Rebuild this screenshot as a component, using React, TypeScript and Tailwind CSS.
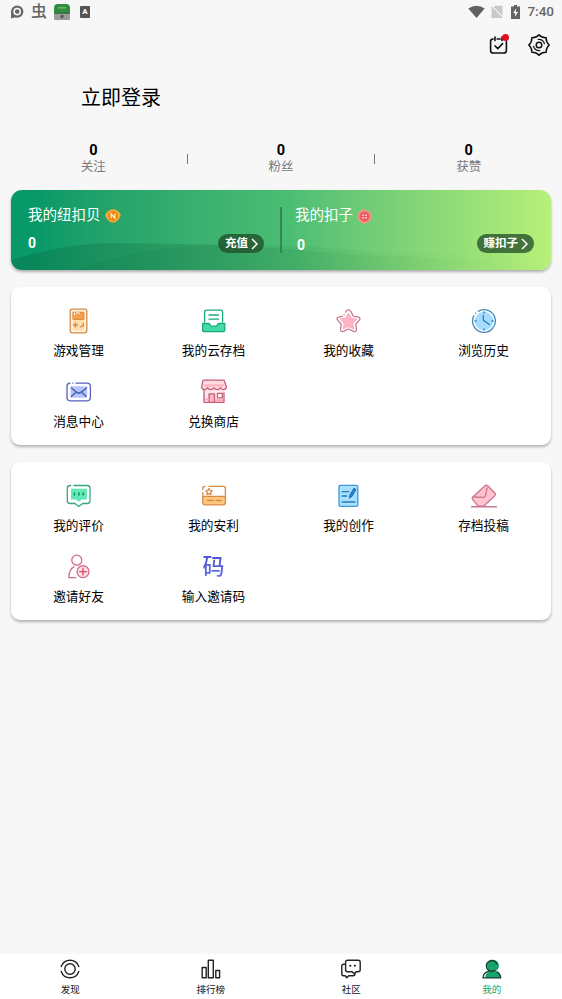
import type { ReactNode } from "react";

const CJK = "font-[Roboto,'Noto_Sans_CJK_SC',sans-serif]";

type Entry = { label: string; icon: ReactNode };

const Icon = ({ stroke, children }: { stroke: string; children: ReactNode }) => (
  <svg
    viewBox="0 0 26 26"
    className="size-[26px]"
    fill="none"
    stroke={stroke}
    strokeWidth="1.3"
    strokeLinecap="round"
    strokeLinejoin="round"
    aria-hidden="true"
  >
    {children}
  </svg>
);

const tools: Entry[] = [
  {
    label: "游戏管理",
    icon: (
      <Icon stroke="#d58a45">
        <rect x="4.2" y="1.2" width="16.6" height="23.6" rx="2.2" fill="#fff5e6" />
        <rect x="6.7" y="3.8" width="11.6" height="18.6" fill="#ffdca8" stroke="none" />
        <rect x="7.3" y="4.2" width="10.6" height="7.2" fill="#f3a04b" strokeWidth="1" />
        <path d="M8.5 6.5v-1.6M10.5 5h3" stroke="#fff" strokeWidth="1" />
        <path d="M9.4 15v4M7.4 17h4M14.6 19l.1-.1M17.4 15.4v2.6h-1.6" />
      </Icon>
    ),
  },
  {
    label: "我的云存档",
    icon: (
      <Icon stroke="#1fa878">
        <path d="M3.6 14V4.2Q3.6 2.2 5.6 2.2h14q2 0 2 2V14" fill="#fff" />
        <path d="M8 7h9.5M8 11.2h9.5" />
        <path d="M1.6 15.5H8l2 2.6h5.4l2-2.6h6.4v6.4q0 1.8-1.8 1.8H3.4q-1.8 0-1.8-1.8Z" fill="#43dca4" />
      </Icon>
    ),
  },
  {
    label: "我的收藏",
    icon: (
      <Icon stroke="#c8798e">
        <path d="m12.5 5.4 2.7 4.7 5.4 1-3.8 4 .7 5.6-5-2.3-5 2.3.7-5.6-3.8-4 5.4-1Z" fill="#ffb4c5" stroke="#ffb4c5" />
        <path d="M9.6 4.2Q10.8 1.7 12.5 1.7q1.6 0 2.6 2.2l1.7 3.4q.4.8 1.4 1l3.6.6q3.8.8 1.2 3.7l-2.5 2.7q-.7.8-.6 1.8l.5 3.8q.2 3.6-3 2.4l-3.6-1.8q-1.3-.6-2.6 0l-3.6 1.8q-3.2 1.2-3-2.4l.5-3.8q.1-1-.6-1.8L2 12.6Q-.6 9.7 3.2 8.9l3.2-.6" />
        <path d="M8.2 6.6v.1" />
      </Icon>
    ),
  },
  {
    label: "浏览历史",
    icon: (
      <Icon stroke="#4389bd">
        <circle cx="13" cy="13" r="9.3" fill="#a5dcff" stroke="none" />
        <path d="M7.2 3.2A11.4 11.4 0 1 1 2.8 7.9M4.5 5.4l.1-.1" />
        <path d="M12.3 7.5v4.7l6 4.3M13 4v1M13 21v1M4 13h1M21 13h1" stroke="#277fc0" />
      </Icon>
    ),
  },
  {
    label: "消息中心",
    icon: (
      <Icon stroke="#5562b8">
        <path d="M10 4.1h11q3.4 0 3.4 3.2v11.3q0 3.2-3.4 3.2H4.4Q1 21.8 1 18.6V7.3q0-3 3-3.2M6.8 4.1h.3" />
        <rect x="4.5" y="7.3" width="16.6" height="11.4" rx="1" fill="#b6c4ff" stroke="none" />
        <path d="m5.5 9 4.6 3.8q2.7 2.6 5.4 0L20.5 9M5.5 17.3l4-3.6M20 17.3l-3.8-3.6" stroke="#4662b7" strokeWidth="1.5" />
      </Icon>
    ),
  },
  {
    label: "兑换商店",
    icon: (
      <Icon stroke="#c45f77">
        <path d="M3 11v12.3h20V11" fill="#ffe6ec" stroke="none" />
        <path d="M8 22.8v-8h5.5v8" fill="#ffb5c4" />
        <path d="M16.5 14.4h4.8v4.4h-4.8Z" fill="#fff" />
        <path d="M4 20.6h3M14.6 21.2h7.6" stroke="#ffa6b7" strokeWidth="2" />
        <path d="M3 11v12.3h20V14" />
        <path d="M2.7 1.2h19.6q.9 0 1.2 1l1.9 5.8q-.2 2.6-2.8 2.6-2 0-3.2-1.8-1.1 1.8-3.2 1.8T13 8.8q-1.1 1.8-3.2 1.8T6.6 8.8Q5.5 10.6 3.5 10.6 1 10.6.7 8l1-5.8q.1-1 1-1Z" fill="#ffd9e0" />
        <path d="M4 6.6h18" stroke="#ffb0bf" strokeWidth="2" />
      </Icon>
    ),
  },
];

const creations: Entry[] = [
  {
    label: "我的评价",
    icon: (
      <Icon stroke="#38a781">
        <path d="M8 2.5h13.2q2.8 0 2.8 2.7v12.6q0 2.7-2.8 2.7h-4.6L12.8 23.4l-3.8-2.9H4.1q-2.8 0-2.8-2.7V5.2q0-2.7 2.8-2.7h.6" />
        <path d="M5 5.8h15.9v10.6h-5.2l-2.9 2.3-2.9-2.3H5Z" fill="#60e9b5" stroke="none" />
        <path d="M8.4 10v2M12.9 10v2M17.3 10v2" stroke="#129367" strokeWidth="1.6" />
      </Icon>
    ),
  },
  {
    label: "我的安利",
    icon: (
      <Icon stroke="#d98b43">
        <path d="M1.8 13.4h22.6v6.6q0 1.8-1.8 1.8H3.6q-1.8 0-1.8-1.8Z" fill="#ffc681" stroke="none" />
        <path d="M8 3.4h14.2q2.2 0 2.2 2.2v14q0 2.2-2.2 2.2H4q-2.2 0-2.2-2.2V9.6M1.8 6.6v-1Q1.8 3.4 4 3.4M1.8 13.4h22.6M6.5 17.5h6M15 17.5h5.4" />
        <path d="m8 5.4 1.1 2 2.2.4-1.6 1.6.3 2.3-2-1.1-2 1.1.3-2.3-1.6-1.6 2.2-.4Z" strokeWidth="1.2" />
      </Icon>
    ),
  },
  {
    label: "我的创作",
    icon: (
      <Icon stroke="#3d9ad7">
        <rect x="3" y="2.3" width="18.8" height="21" rx="1.2" fill="#a9dfff" />
        <path d="M6.2 8.6h6.6M6.2 13h4.6" stroke="#237dba" />
        <path d="M6.2 19h12.6" stroke="#237dba" strokeWidth="1.6" />
        <path d="m13.6 14.8.6-2.9 3.8-6.3 1.6 1-3.7 6.3Z" fill="#3ba5ec" stroke="#176fae" />
      </Icon>
    ),
  },
  {
    label: "存档投稿",
    icon: (
      <Icon stroke="#c8768b">
        <path d="M1.8 14 14 2.8q1.5-1.2 3 .2l6.8 7q1.2 1.5-.2 2.9L13.4 22.4q-.8.8-2 .8H8.6q-1.2 0-2-.8L1.7 16.6q-1-1.4.1-2.6Z" fill="#ffc2ce" />
        <path d="m3 14 9 .4q2 0 2.5-1.8l1.6-7.8" />
        <path d="M.7 23.8h24.6" strokeWidth="1.6" />
      </Icon>
    ),
  },
  {
    label: "邀请好友",
    icon: (
      <Icon stroke="#d06b83">
        <circle cx="10.8" cy="6.2" r="5" />
        <path d="M9.8 23.6H2.9Q2.9 15 8 12.8" />
        <circle cx="17" cy="17.6" r="6" fill="#ffdce4" />
        <path d="M17 14.2V21M13.6 17.6h6.8" stroke="#c84e6b" />
      </Icon>
    ),
  },
  {
    label: "输入邀请码",
    icon: (
      <span className="block bg-linear-to-b from-[#4d52cf] via-[#595fdb] to-[#5a72ec] bg-clip-text text-[22px] leading-[26px] font-medium text-transparent">
        码
      </span>
    ),
  },
];

const StatusBar = () => (
  <div className="flex h-[23px] items-center justify-between pr-[8px] pl-[10px] text-[#666]">
    <div className="flex items-center">
      <svg viewBox="0 0 14 14" className="size-[14px]" aria-hidden="true">
        <path d="M1 13.4V6.6A6.2 6.2 0 1 1 7.2 12.8L4 12.4Z" fill="#666" />
        <circle cx="7.2" cy="6.6" r="3.1" fill="#666" stroke="#fff" strokeWidth="1.5" />
      </svg>
      <span className="ml-[7px] text-[16px] leading-[23px] font-medium">虫</span>
      <svg viewBox="0 0 18 18" className="ml-[6px] size-[18px]" aria-hidden="true">
        <path d="M1 9h16v6.5q0 1.5-1.5 1.5h-13Q1 17 1 15.5Z" fill="#989b98" />
        <path d="M1 10V5q0-4 4-4h8q4 0 4 4v5Z" fill="#2f8e40" />
        <path d="M5 4.8h8" stroke="#78bf73" strokeWidth="1.3" />
        <path d="M1.5 10.2h15" stroke="#245d2d" />
        <path d="M7.7 12h2.8v3H7.7Z" fill="#555" />
      </svg>
      <span className="ml-[9px] flex h-3 w-[10px] items-center justify-center rounded-[1px] bg-[#555] text-[8px] font-bold text-white">
        A
      </span>
    </div>

    <div className="flex items-center">
      <svg viewBox="0 0 17 13" className="h-[13px] w-[17px]" aria-hidden="true">
        <path d="M.3 3.5Q8.5-2.2 16.7 3.5L8.5 13Z" fill="#606060" />
      </svg>
      <svg viewBox="0 0 12 13" className="ml-[6px] h-[13px] w-3" aria-hidden="true">
        <path d="M4 .8h7.5V13H.5V4.3Z" fill="#c9c9c9" />
        <path d="m.3 1.2 11.5 11.6" stroke="#f7f7f7" strokeWidth="2" />
        <path d="m0 1.8 11 11" stroke="#aaa" />
      </svg>
      <svg viewBox="0 0 9 14" className="ml-[8px] h-[14px] w-[9px]" aria-hidden="true">
        <path d="M3 0h3v1.4h3V14H0V1.4h3Z" fill="#626262" />
        <path d="M5.2 3.2 2.2 8h2l-.4 4L7 7H4.8Z" fill="#fff" />
      </svg>
      <span className="ml-[7px] text-[13.5px] leading-[23px] font-medium">7:40</span>
    </div>
  </div>
);

const TopActions = () => (
  <div className="flex h-[43px] items-center justify-end gap-[19px] pr-[12px]">
    <button type="button" className="relative" aria-label="签到">
      <svg viewBox="0 0 20 20" className="size-5" fill="none" stroke="#111" strokeWidth="1.6" strokeLinecap="round" strokeLinejoin="round">
        <path d="M4.2 4H4Q1.6 4 1.6 6.4v9Q1.6 18 4.2 18h10.6q2.6 0 2.6-2.6v-9M8.2 4h3M6 2v3.6M13 2v3.6M6 10.8l2.8 2.8 4.8-5" />
      </svg>
      <span className="absolute -top-[1px] right-0 size-[7px] rounded-full bg-[#e00b22]" />
    </button>
    <button type="button" aria-label="设置">
      <svg viewBox="0 0 22 22" className="size-[22px]" fill="none" stroke="#111" strokeWidth="1.5" strokeLinejoin="round" strokeLinecap="round">
        <path d="M11 .8q2.9 3.3 7.2 3 -.3 4.3 3 7.2-3.3 2.9-3 7.2-4.3-.3-7.2 3-2.9-3.3-7.2-3 .3-4.3-3-7.2 3.3-2.9 3-7.2 4.3.3 7.2-3Z" />
        <circle cx="11" cy="11" r="2.8" />
        <path d="M10.2 5.4q4.8-.4 6.2 4.2M11.8 16.6q-4.8.4-6.2-4.2" strokeWidth="1.3" />
      </svg>
    </button>
  </div>
);

const Stat = ({ label }: { label: string }) => (
  <div className="flex flex-1 flex-col items-center">
    <span className="text-[14.5px] leading-4 font-bold text-black">0</span>
    <span className="text-[12.5px] leading-4 text-[#777]">{label}</span>
  </div>
);

const PillButton = ({ label }: { label: string }) => (
  <button type="button" className="flex h-[19px] items-center gap-[3px] rounded-full bg-[#1f4b27]/75 pr-[6px] pl-[7px] text-[11.5px] font-bold text-white">
    {label}
    <svg viewBox="0 0 7 12" className="h-3 w-[7px]" fill="none" stroke="currentColor" strokeWidth="1.5" aria-hidden="true">
      <path d="m1 1 5 5-5 5" />
    </svg>
  </button>
);

const Wallet = () => (
  <section className="relative mx-[11px] mt-[15px] h-20 overflow-hidden rounded-[11px] bg-linear-to-r from-[#079968] from-5% via-[#4cbe73] via-52% to-[#b7f078] text-white shadow-[0_2px_3px_rgba(0,0,0,0.3)]">
    <svg viewBox="0 0 540 80" className="absolute inset-0 h-full w-full" aria-hidden="true">
      <defs>
        <linearGradient id="hill">
          <stop stopColor="#08754d" stopOpacity=".5" />
          <stop offset=".5" stopColor="#25834b" stopOpacity=".22" />
          <stop offset="1" stopColor="#8bd26c" stopOpacity="0" />
        </linearGradient>
      </defs>
      <path d="M0 70Q60 52 110 53Q180 54 230 55Q380 70 540 70V80H0Z" fill="url(#hill)" />
      <path d="M65 80Q130 55 205 55Q290 53 365 62Q440 66 540 57V80Z" fill="url(#hill)" opacity=".45" />
    </svg>

    <div className="relative flex h-full">
      <div className="flex w-[269px] flex-col pt-[16px] pr-[16px] pl-[17px]">
        <div className="flex h-5 items-center gap-[4px] text-[14.5px]">
          我的纽扣贝
          <svg viewBox="0 0 16 16" className="size-4" aria-hidden="true">
            <path d="M4 2.6Q8-.2 12 2.6q4 2.6 3.7 5.4Q14 12 10.6 14q-2.6 1-5.2 0Q2 12 .3 8 0 5.2 4 2.6Z" fill="#f6ac33" />
            <circle cx="8" cy="8" r="5" fill="#ee8226" />
            <path d="M6.2 10.2V5.8l3.6 4.4V5.8" fill="none" stroke="#fff2a8" strokeWidth="1.3" />
          </svg>
        </div>
        <div className="mt-[8px] flex h-[19px] items-center justify-between">
          <span className="text-[14px] font-bold">0</span>
          <PillButton label="充值" />
        </div>
      </div>

      <div className="mt-[17px] h-[46px] w-[2px] bg-[#297d50]/80" />

      <div className="flex flex-1 flex-col pt-[16px] pr-[17px] pl-[13px]">
        <div className="flex h-5 items-center gap-[4px] text-[14.5px]">
          我的扣子
          <svg viewBox="0 0 16 16" className="size-[15px]" aria-hidden="true">
            <circle cx="8" cy="8" r="7.2" fill="#ef8b7a" stroke="#e9a387" />
            <circle cx="8" cy="8" r="5.2" fill="#e65b66" />
            <path d="M5.5 6.6h2M8.6 6.6h2M5.5 9.4h2M8.6 9.4h2" stroke="#ffc6c0" strokeWidth="1.7" />
          </svg>
        </div>
        <div className="mt-[8px] flex h-[19px] items-center justify-between">
          <span className="pt-[3px] pl-[2px] text-[14px] font-bold">0</span>
          <PillButton label="赚扣子" />
        </div>
      </div>
    </div>
  </section>
);

const EntryCard = ({ entries }: { entries: Entry[] }) => (
  <section className="mx-[11px] mt-[17px] grid h-[158px] grid-cols-4 content-start gap-y-[18px] rounded-[9px] bg-white pt-[21px] shadow-[0_2px_3px_rgba(0,0,0,0.28)]">
    {entries.map((entry) => (
      <button key={entry.label} type="button" className="flex flex-col items-center">
        {entry.icon}
        <span className="mt-[7px] text-[12.7px] leading-5 text-black">{entry.label}</span>
      </button>
    ))}
  </section>
);

const navItems = [
  {
    label: "发现",
    icon: (
      <>
        <circle cx="10" cy="10" r="5.2" />
        <path d="M1.2 7.5Q3.5 1.2 10 1.2t8.8 6.3M1.2 12.5q2.3 6.3 8.8 6.3t8.8-6.3" />
      </>
    ),
  },
  {
    label: "排行榜",
    icon: <path d="M1.2 8.5h4v10.2h-4ZM7.3 1.3h5v17.4h-5ZM14.8 11.5h3.8v7.2h-3.8Z" />,
  },
  {
    label: "社区",
    icon: (
      <>
        <path d="M6.6 1.3h10.6q2 0 2 2v7.4q0 2-2 2h-2l-2 2-2-2H6.6q-2 0-2-2V3.3q0-2 2-2ZM4.4 5.2H2.6q-1.8 0-1.8 1.8v7.9q0 1.8 1.8 1.8h1.6l1.6 2 1.9-2h4.7q1.6 0 1.8-1.8" />
        <path d="M9.2 6.8h.2M13.8 6.8h.2" strokeWidth="2" />
      </>
    ),
  },
  {
    label: "我的",
    icon: (
      <>
        <circle cx="11" cy="6.8" r="6" fill="#17a56c" stroke="none" />
        <path d="M3.4 19q-1-4.5 5-7h5q5 1.6 5.6 7Z" fill="#17a56c" stroke="none" />
        <path d="M12.8 11.4A5.4 5.4 0 1 1 14.8 5M6.4 12.4Q1 14 1 18.9h17.6q-.2-4-3.6-6" stroke="#163f30" />
      </>
    ),
  },
];

const BottomNav = () => (
  <nav className="mt-auto flex h-[45px] bg-white">
    {navItems.map((item) => (
      <button
        key={item.label}
        type="button"
        className={`flex flex-1 flex-col items-center pt-[5px] text-[9.5px] ${item.label === "我的" ? "text-[#17a56c]" : "text-[#111]"}`}
      >
        <svg viewBox="0 0 20 20" className="size-5" fill="none" stroke="#222" strokeWidth="1.4" strokeLinecap="round" strokeLinejoin="round" aria-hidden="true">
          {item.icon}
        </svg>
        <span className="mt-[5px] leading-3">{item.label}</span>
      </button>
    ))}
  </nav>
);

export default function App() {
  return (
    <main className={`flex h-[999px] w-[562px] flex-col overflow-hidden bg-[#f7f7f7] ${CJK}`}>
      <StatusBar />
      <TopActions />
      <h1 className="mt-[17px] pl-[81px] text-[20px] leading-[30px] text-black">立即登录</h1>
      <div className="mt-[30px] flex items-center">
        <Stat label="关注" />
        <span className="h-[10px] w-px bg-[#777]" />
        <Stat label="粉丝" />
        <span className="h-[10px] w-px bg-[#777]" />
        <Stat label="获赞" />
      </div>
      <Wallet />
      <EntryCard entries={tools} />
      <EntryCard entries={creations} />
      <BottomNav />
    </main>
  );
}
